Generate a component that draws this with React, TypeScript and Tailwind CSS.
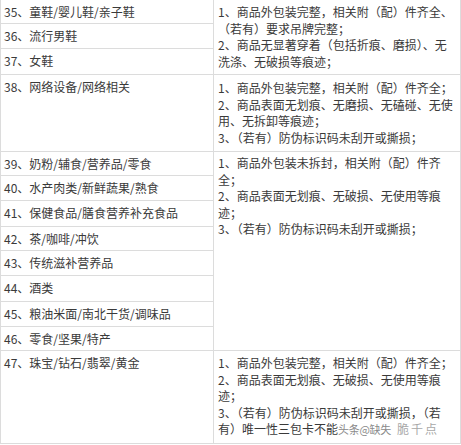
const rows: { label: string; h: string }[] = [
  { label: "35、童鞋/婴儿鞋/亲子鞋", h: "h-[24px]" },
  { label: "36、流行男鞋", h: "h-[25px]" },
  { label: "37、女鞋", h: "h-[26px]" },
  { label: "38、网络设备/网络相关", h: "h-[77px]" },
  { label: "39、奶粉/辅食/营养品/零食", h: "h-[24px]" },
  { label: "40、水产肉类/新鲜蔬果/熟食", h: "h-[25px]" },
  { label: "41、保健食品/膳食营养补充食品", h: "h-[26px]" },
  { label: "42、茶/咖啡/冲饮", h: "h-[24px]" },
  { label: "43、传统滋补营养品", h: "h-[25px]" },
  { label: "44、酒类", h: "h-[26px]" },
  { label: "45、粮油米面/南北干货/调味品", h: "h-[25px]" },
  { label: "46、零食/坚果/特产", h: "h-[24px]" },
  { label: "47、珠宝/钻石/翡翠/黄金", h: "h-[93px]" },
];

// right column: which row starts a group, how many rows it spans, and its lines
const groups: Record<number, { span: number; lines: React.ReactNode[]; pt: string }> = {
  0: {
    span: 3,
    pt: "pt-[4px]",
    lines: [
      "1、商品外包装完整，相关附（配）件齐全、",
      "（若有）要求吊牌完整；",
      "2、商品无显著穿着（包括折痕、磨损）、无",
      "洗涤、无破损等痕迹；",
    ],
  },
  3: {
    span: 1,
    pt: "pt-[5px]",
    lines: [
      "1、商品外包装完整，相关附（配）件齐全；",
      "2、商品表面无划痕、无磨损、无磕碰、无使",
      "用、无拆卸等痕迹；",
      "3、（若有）防伪标识码未刮开或撕损；",
    ],
  },
  4: {
    span: 8,
    pt: "pt-[3px]",
    lines: [
      "1、商品外包装未拆封，相关附（配）件齐",
      "全；",
      "2、商品表面无划痕、无破损、无使用等痕",
      "迹；",
      "3、（若有）防伪标识码未刮开或撕损；",
    ],
  },
  12: {
    span: 1,
    pt: "pt-[4px]",
    lines: [
      "1、商品外包装完整，相关附（配）件齐全；",
      "2、商品表面无划痕、无破损、无使用等痕",
      "迹；",
      "3、（若有）防伪标识码未刮开或撕损，（若",
      <>
        有）唯一性三包卡不能
        <span className="text-[11px] tracking-tight text-[#8a8a8a]">头条@缺失</span>
        <span className="ml-[6px] tracking-[2px] text-[#a8a8a8]">脆千点</span>
      </>,
    ],
  },
};

export default function App() {
  return (
    <div
      className="w-[461px] h-[445px] overflow-hidden bg-white text-[#3a3a3a] text-[12px]"
      style={{ fontFamily: '"Noto Sans CJK SC", "Noto Sans", sans-serif' }}
    >
      <table className="-mt-[1px] w-[460px] table-fixed border-collapse">
        <colgroup>
          <col className="w-[213px]" />
          <col className="w-[247px]" />
        </colgroup>
        <tbody>
          {rows.map((r, i) => {
            const g = groups[i];
            return (
              <tr key={i} className={r.h}>
                <td className="border border-[#dcdcdc] align-top pl-[3px] pt-[4px] leading-[16px] whitespace-nowrap">
                  {r.label}
                </td>
                {g && (
                  <td
                    rowSpan={g.span}
                    className={`border border-[#dcdcdc] align-top pl-[4px] ${g.pt} leading-[16.5px] whitespace-nowrap`}
                  >
                    {g.lines.map((l, j) => (
                      <div key={j}>{l}</div>
                    ))}
                  </td>
                )}
              </tr>
            );
          })}
        </tbody>
      </table>
    </div>
  );
}
